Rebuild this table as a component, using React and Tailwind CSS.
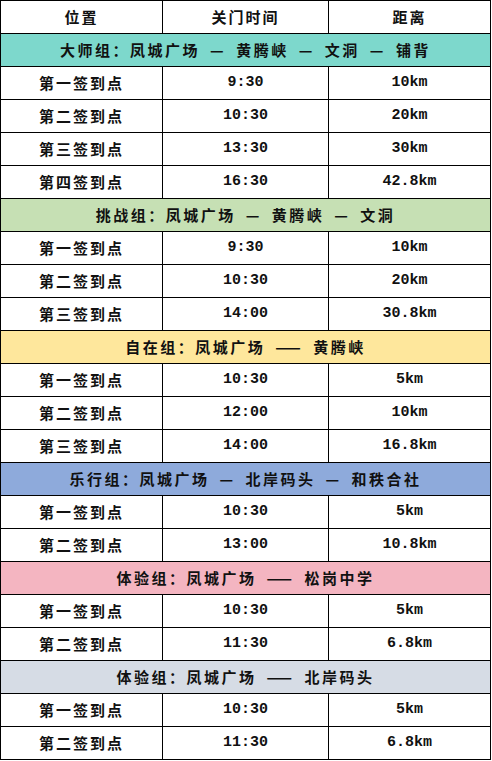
import React from 'react';

const groups = [
  {
    title: '大师组：凤城广场 — 黄腾峡 — 文洞 — 铺背',
    bg: 'bg-[#7dd8cc]',
    rows: [
      ['第一签到点', '9:30', '10km'],
      ['第二签到点', '10:30', '20km'],
      ['第三签到点', '13:30', '30km'],
      ['第四签到点', '16:30', '42.8km'],
    ],
  },
  {
    title: '挑战组：凤城广场 — 黄腾峡 — 文洞',
    bg: 'bg-[#c6e0b4]',
    rows: [
      ['第一签到点', '9:30', '10km'],
      ['第二签到点', '10:30', '20km'],
      ['第三签到点', '14:00', '30.8km'],
    ],
  },
  {
    title: '自在组：凤城广场 —— 黄腾峡',
    bg: 'bg-[#fee79c]',
    rows: [
      ['第一签到点', '10:30', '5km'],
      ['第二签到点', '12:00', '10km'],
      ['第三签到点', '14:00', '16.8km'],
    ],
  },
  {
    title: '乐行组：凤城广场 — 北岸码头 — 和秩合社',
    bg: 'bg-[#8eaadb]',
    rows: [
      ['第一签到点', '10:30', '5km'],
      ['第二签到点', '13:00', '10.8km'],
    ],
  },
  {
    title: '体验组：凤城广场 —— 松岗中学',
    bg: 'bg-[#f4b5c1]',
    rows: [
      ['第一签到点', '10:30', '5km'],
      ['第二签到点', '11:30', '6.8km'],
    ],
  },
  {
    title: '体验组：凤城广场 —— 北岸码头',
    bg: 'bg-[#d6dce5]',
    rows: [
      ['第一签到点', '10:30', '5km'],
      ['第二签到点', '11:30', '6.8km'],
    ],
  },
];

const cjk = "font-['Noto_Sans_CJK_SC',sans-serif]";
const mono = "font-['Liberation_Mono','Noto_Sans_CJK_SC',monospace]";

// wider gaps around the dashes, like the source sheet
const spaced = (s) => s.replace(/ /g, '\u2002');

const App = () => {
  return (
    <div className="w-[492px] bg-white">
      <table className="w-[491px] table-fixed border-collapse border border-black text-[15px] font-bold text-[#111]">
        <colgroup>
          <col className="w-[162px]" />
          <col className="w-[166px]" />
          <col />
        </colgroup>
        <thead>
          <tr className={`h-[33px] ${cjk} tracking-[2px]`}>
            <th className="border border-black text-center">位置</th>
            <th className="border border-black text-center">关门时间</th>
            <th className="border border-black text-center">距离</th>
          </tr>
        </thead>
        <tbody>
          {groups.map((g) => (
            <React.Fragment key={g.title}>
              <tr className={`h-[33px] ${g.bg}`}>
                <td colSpan={3} className={`border border-black text-center ${cjk} tracking-[2.5px] font-semibold whitespace-pre`}>
                  {spaced(g.title)}
                </td>
              </tr>
              {g.rows.map((r, i) => (
                <tr key={i} className="h-[33px]">
                  <td className={`border border-black text-center ${cjk} tracking-[2px]`}>{r[0]}</td>
                  <td className={`border border-black text-center ${mono}`}>{r[1]}</td>
                  <td className={`border border-black text-center ${mono}`}>{r[2]}</td>
                </tr>
              ))}
            </React.Fragment>
          ))}
        </tbody>
      </table>
    </div>
  );
};

export default App;
